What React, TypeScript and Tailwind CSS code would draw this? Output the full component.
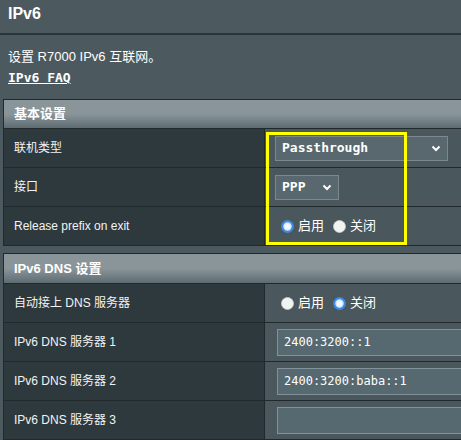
const sans = "font-['Liberation_Sans','Noto_Sans_CJK_SC',sans-serif]";
const mono = "font-['DejaVu_Sans_Mono','Liberation_Mono',monospace]";

const Radio = ({ on }: { on: boolean }) => (
  <svg width="13" height="13" viewBox="0 0 13 13" className="shrink-0">
    {on ? (
      <>
        <circle cx="6.5" cy="6.5" r="5.3" fill="#dbe9f8" stroke="#3d8ae0" strokeWidth="2.2" />
        <circle cx="6.5" cy="6.5" r="2.6" fill="#f4f8fd" />
      </>
    ) : (
      <circle cx="6.5" cy="6.5" r="6" fill="#f2f4f2" stroke="#c9cfd0" strokeWidth="0.8" />
    )}
  </svg>
);

const Chevron = () => (
  <svg width="10" height="7" viewBox="0 0 10 7" className="shrink-0">
    <path d="M1.5 1.5 L5 5 L8.5 1.5" fill="none" stroke="#ffffff" strokeWidth="2" />
  </svg>
);

const RadioPair = ({ first }: { first: boolean }) => (
  <div className="flex items-center pl-[16px] text-[13px] text-white">
    <Radio on={first} />
    <span className="ml-[4px]">启用</span>
    <span className="ml-[9px]">
      <Radio on={!first} />
    </span>
    <span className="ml-[4px]">关闭</span>
  </div>
);

const Row = ({ label, children }: { label: string; children?: React.ReactNode }) => (
  <div className="flex h-[39px] border-b border-[#21292d]">
    <div className="flex w-[261px] shrink-0 items-center border-r border-[#21292d] bg-[#2e393e] pl-[10px] text-[12px] text-[#f3f3f3]">
      {label}
    </div>
    <div className="flex flex-1 items-center bg-[#4a575c]">{children}</div>
  </div>
);

const Header = ({ title, h }: { title: string; h: string }) => (
  <div
    className={`${h} flex items-center border-b border-[#21292d] bg-[linear-gradient(to_bottom,#8a9599_0%,#8a9599_50%,#6f7c81_80%,#5e6b70_100%)] pl-[10px] text-[13px] font-bold text-white`}
  >
    {title}
  </div>
);

const TextBox = ({ value }: { value?: string }) => (
  <div
    className={`ml-[12px] flex h-[27px] flex-1 items-center border border-[#83929a] border-r-0 bg-[#566870] pl-[6px] text-[12px] text-white ${mono}`}
  >
    {value}
  </div>
);

export default function App() {
  return (
    <div className={`h-[440px] w-[461px] overflow-hidden bg-[#4c5a5f] text-white ${sans}`}>
      <div className="h-[33px] pl-[8px] pt-[4px] text-[16px] font-bold leading-[20px]">IPv6</div>
      <div className="h-[2px] bg-[#2b3438]" />
      <div className="mt-[14px] pl-[8px] text-[13px] leading-[16px]">设置 R7000 IPv6 互联网。</div>
      <div className={`mt-[5px] pl-[8px] text-[13px] font-bold leading-[16px] underline ${mono}`}>IPv6 FAQ</div>

      <div className="relative ml-[3px] mt-[13px] border-l border-t border-[#21292d]">
        <Header title="基本设置" h="h-[29px]" />
        <Row label="联机类型">
          <div
            className={`ml-[10px] flex h-[25px] w-[173px] items-center justify-between border border-[#7b898e] bg-[#58686e] pl-[6px] pr-[6px] text-[13px] font-bold ${mono}`}
          >
            <span>Passthrough</span>
            <Chevron />
          </div>
        </Row>
        <Row label="接口">
          <div
            className={`ml-[10px] flex h-[25px] w-[64px] items-center justify-between border border-[#7b898e] bg-[#58686e] pl-[6px] pr-[6px] text-[13px] font-bold ${mono}`}
          >
            <span>PPP</span>
            <Chevron />
          </div>
        </Row>
        <Row label="Release prefix on exit">
          <RadioPair first={true} />
        </Row>
        <div className="pointer-events-none absolute left-[262px] top-[32px] h-[113px] w-[141px] border-[3px] border-[#ffff00]" />
      </div>

      <div className="ml-[3px] mt-[7px] border-l border-t border-[#21292d]">
        <Header title="IPv6 DNS 设置" h="h-[30px]" />
        <Row label="自动接上 DNS 服务器">
          <RadioPair first={false} />
        </Row>
        <Row label="IPv6 DNS 服务器 1">
          <TextBox value="2400:3200::1" />
        </Row>
        <Row label="IPv6 DNS 服务器 2">
          <TextBox value="2400:3200:baba::1" />
        </Row>
        <Row label="IPv6 DNS 服务器 3">
          <TextBox />
        </Row>
      </div>
    </div>
  );
}
